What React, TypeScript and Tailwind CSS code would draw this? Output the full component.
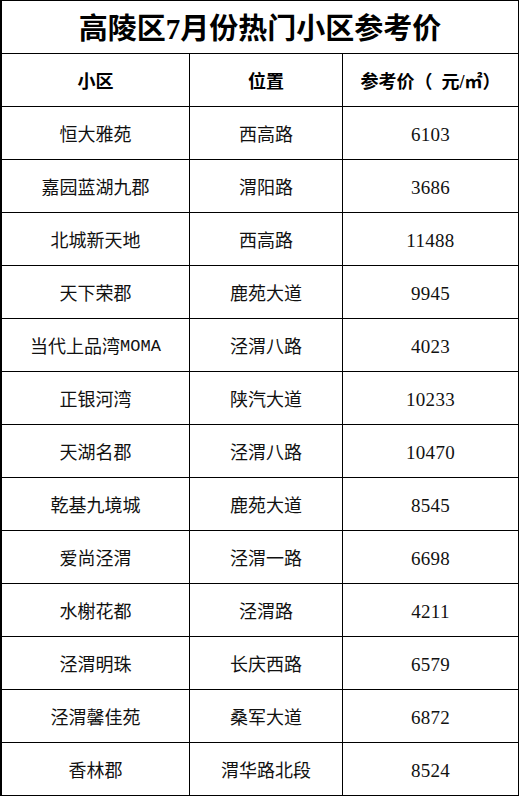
const ROWS: [string, string, string][] = [
  ["恒大雅苑", "西高路", "6103"],
  ["嘉园蓝湖九郡", "渭阳路", "3686"],
  ["北城新天地", "西高路", "11488"],
  ["天下荣郡", "鹿苑大道", "9945"],
  ["当代上品湾MOMA", "泾渭八路", "4023"],
  ["正银河湾", "陕汽大道", "10233"],
  ["天湖名郡", "泾渭八路", "10470"],
  ["乾基九境城", "鹿苑大道", "8545"],
  ["爱尚泾渭", "泾渭一路", "6698"],
  ["水榭花都", "泾渭路", "4211"],
  ["泾渭明珠", "长庆西路", "6579"],
  ["泾渭馨佳苑", "桑军大道", "6872"],
  ["香林郡", "渭华路北段", "8524"],
]

const font = "font-['Liberation_Serif','Noto_Sans_CJK_SC',serif]"

// latin letters in the source are half-width, so squeeze them with a mono face
function Text({ s }: { s: string }) {
  const parts = s.split(/([A-Za-z]+)/).filter(Boolean)
  return (
    <>
      {parts.map((p, i) =>
        /^[A-Za-z]+$/.test(p) ? (
          <span key={i} className="font-['Liberation_Mono',monospace] text-[17px]">
            {p}
          </span>
        ) : (
          <span key={i}>{p}</span>
        )
      )}
    </>
  )
}

function Row({ cells, head }: { cells: [string, string, string]; head?: boolean }) {
  return (
    <div className="grid grid-cols-[188px_153px_176px]">
      {cells.map((c, i) => (
        <div
          key={i}
          className={`h-[53px] pt-[4px] flex items-center justify-center whitespace-pre border-r border-b border-black ${
            head ? "text-[18px] font-bold text-black" : "text-[#111]"
          } ${!head && i === 2 ? "text-[19px] tracking-[0.3px]" : "text-[18px]"}`}
        >
          {head ? c : <Text s={c} />}
        </div>
      ))}
    </div>
  )
}

export default function App() {
  return (
    <div className={`w-[519px] bg-white ${font}`}>
      <div className="border-l-2 border-t border-black">
        <div className="h-[53px] pt-[5px] flex items-center justify-center border-r border-b border-black text-[29px] font-bold text-black">
          高陵区7月份热门小区参考价
        </div>
        <Row cells={["小区", "位置", "参考价（  元/㎡）"]} head />
        {ROWS.map((r) => (
          <Row key={r[0]} cells={r} />
        ))}
      </div>
    </div>
  )
}
